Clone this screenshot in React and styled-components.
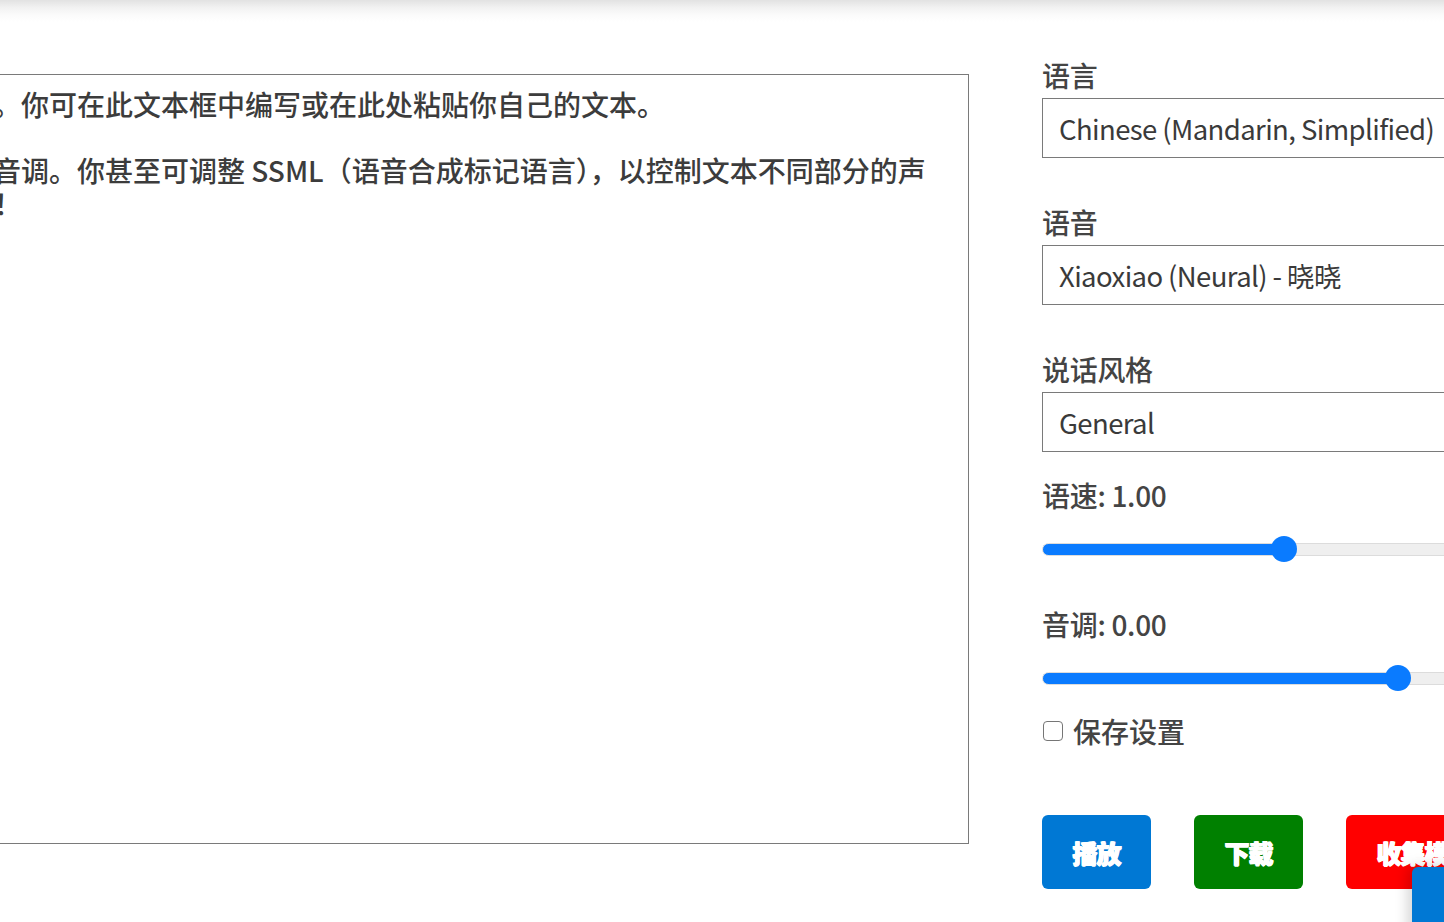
import React, { useState } from "react";
import styled, { createGlobalStyle } from "styled-components";

const Global = createGlobalStyle`
  html, body { margin: 0; padding: 0; background: #fff; overflow: hidden; }
  body { font-family: "Noto Sans CJK SC", "Noto Sans", sans-serif; color: #444; }
  * { box-sizing: border-box; }
`;

const Shade = styled.div`
  height: 22px;
  background: linear-gradient(to bottom, #e2e2e2 0%, #f2f2f2 35%, #fbfbfb 70%, #fff 100%);
`;

const Main = styled.main`
  display: flex;
  align-items: flex-start;
  gap: 73px;
  margin-left: -470px;
  padding-top: 32px;
`;

const Editor = styled.textarea`
  flex: 0 0 1439px;
  height: 770px;
  margin-top: 20px;
  padding: 13px 14px;
  border: 1px solid #7a7a7a;
  border-radius: 0;
  resize: none;
  overflow: hidden;
  font-family: "Noto Sans CJK SC", sans-serif;
  font-size: 28px;
  font-weight: 500;
  line-height: 33px;
  color: #3c3c3c;
  background: #fff;
  outline: none;
`;

const Panel = styled.section`
  flex: 0 0 484px;
  display: flex;
  flex-direction: column;
`;

const Label = styled.label`
  display: block;
  font-size: 28px;
  line-height: 42px;
  font-weight: 500;
  letter-spacing: -0.3px;
  color: #444;
  margin-top: ${(p) => p.$gap || 0}px;
`;

const Select = styled.select`
  appearance: none;
  width: 100%;
  height: 60px;
  margin-top: 2px;
  padding: 0 16px;
  border: 1px solid #7a7a7a;
  border-radius: 0;
  background: #fff;
  font-family: "Noto Sans CJK SC", sans-serif;
  font-size: 27.5px;
  letter-spacing: -0.6px;
  color: #3a3a3a;
  outline: none;
`;

const Range = styled.input.attrs({ type: "range" })`
  appearance: none;
  -webkit-appearance: none;
  width: 100%;
  height: 26px;
  margin: ${(p) => p.$top}px 0 0;
  background: transparent;
  &::-webkit-slider-runnable-track {
    height: 13px;
    border-radius: 7px;
    border: 1px solid #dcdcdc;
    background: linear-gradient(
      to right,
      #0a7bff 0%,
      #0a7bff var(--fill),
      #efefef var(--fill),
      #efefef 100%
    );
  }
  &::-webkit-slider-thumb {
    -webkit-appearance: none;
    width: 26px;
    height: 26px;
    margin-top: -7.5px;
    border-radius: 50%;
    background: #0a7bff;
    border: none;
  }
`;

const CheckRow = styled.label`
  display: flex;
  align-items: center;
  gap: 10px;
  margin-top: 19px;
  font-size: 28px;
  line-height: 42px;
  font-weight: 500;
  color: #444;
`;

const Check = styled.input.attrs({ type: "checkbox" })`
  appearance: none;
  -webkit-appearance: none;
  width: 20px;
  height: 20px;
  margin: 0 0 0 1px;
  border: 1.5px solid #767676;
  border-radius: 4px;
  background: #fff;
`;

const Actions = styled.div`
  display: flex;
  gap: 43px;
  margin-top: 63px;
`;

const Action = styled.button`
  flex: 0 0 auto;
  height: 74px;
  padding: 0 30.5px;
  border: none;
  border-radius: 6px;
  background: ${(p) => p.$bg};
  color: #fff;
  font-family: "Noto Sans CJK SC", sans-serif;
  font-size: 25px;
  font-weight: 900;
  letter-spacing: -1px;
  white-space: nowrap;
  text-shadow: 0.7px 0 0 #fff, -0.7px 0 0 #fff, 0 0.7px 0 #fff;
`;

const Floating = styled.div`
  position: fixed;
  right: -40px;
  bottom: -40px;
  width: 72px;
  height: 95px;
  border-radius: 6px 0 0 0;
  background: #0078d4;
  box-shadow: -4px 0 14px rgba(0, 0, 0, 0.18);
`;

const TEXT =
  "你可以将此文本替换为任何所需文本。你可在此文本框中编写或在此处粘贴你自己的文本。\n\n试用不同的语言和声音。改变语速和音调。你甚至可调整 SSML（语音合成标记语言），以控制文本不同部分的声音。单击上面的 “SSML” 试用一下！\n\n请尽情使用文本转语音功能！";

export default function App() {
  const [rate, setRate] = useState(1);
  const [pitch, setPitch] = useState(0);
  return (
    <>
      <Global />
      <Shade />
      <Main>
        <Editor lang="zh-CN" defaultValue={TEXT} spellCheck={false} />
        <Panel>
          <Label>语言</Label>
          <Select defaultValue="zh-CN">
            <option value="zh-CN">Chinese (Mandarin, Simplified)</option>
          </Select>
          <Label $gap={43}>语音</Label>
          <Select defaultValue="xx">
            <option value="xx">Xiaoxiao (Neural) - 晓晓</option>
          </Select>
          <Label $gap={43}>说话风格</Label>
          <Select defaultValue="general">
            <option value="general">General</option>
          </Select>
          <Label $gap={22}>语速: {rate.toFixed(2)}</Label>
          <Range
            $top={20}
            min={0}
            max={2}
            step={0.01}
            value={rate}
            onChange={(e) => setRate(+e.target.value)}
            style={{ "--fill": `${(rate / 2) * 100}%` }}
          />
          <Label $gap={41}>音调: {pitch.toFixed(2)}</Label>
          <Range
            $top={20}
            min={-3}
            max={1}
            step={0.01}
            value={pitch}
            onChange={(e) => setPitch(+e.target.value)}
            style={{ "--fill": `${((pitch + 3) / 4) * 100}%` }}
          />
          <CheckRow>
            <Check />
            保存设置
          </CheckRow>
          <Actions>
            <Action $bg="#0078d4">播放</Action>
            <Action $bg="#008000">下载</Action>
            <Action $bg="#ff0000">收集模型</Action>
          </Actions>
        </Panel>
      </Main>
      <Floating />
    </>
  );
}
